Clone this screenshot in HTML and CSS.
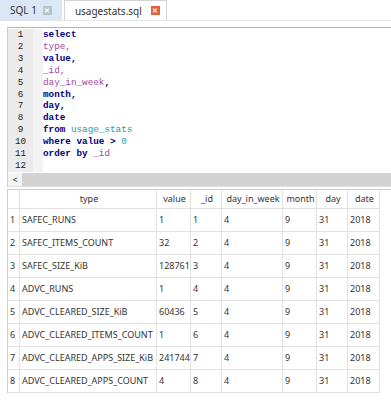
FILE: index.html
```
<!DOCTYPE html>
<html>
<head>
  <title>usagestats.sql</title>
  <link rel="stylesheet" href="styles.css">
</head>
<body>
  <div class="tabs">
    <div class="tab">SQL 1 <span class="close">&#x2715;</span></div>
    <div class="tab active">usagestats.sql <span class="close red">&#x2715;</span></div>
  </div>

  <div class="editor">
    <div class="code">
      <div class="gutter">
        <div>1</div><div>2</div><div>3</div><div>4</div><div>5</div><div>6</div>
        <div>7</div><div>8</div><div>9</div><div>10</div><div>11</div><div>12</div>
      </div>
      <div class="fold"></div>
      <div class="lines">
        <div><span class="kw">select</span></div>
        <div><span class="id">type,</span></div>
        <div><span class="kw">value,</span></div>
        <div><span class="id">_id,</span></div>
        <div><span class="id">day_in_week</span><span class="kw">,</span></div>
        <div><span class="kw">month,</span></div>
        <div><span class="kw">day,</span></div>
        <div><span class="kw">date</span></div>
        <div><span class="kw">from</span> <span class="tbl">usage_stats</span></div>
        <div><span class="kw">where value &gt;</span> <span class="tbl">0</span></div>
        <div><span class="kw">order by</span> <span class="id">_id</span></div>
        <div>&nbsp;</div>
      </div>
    </div>
    <div class="hscroll">
      <div class="arrow">&lt;</div>
      <div class="bar"></div>
    </div>
  </div>

  <div class="results">
    <table class="grid">
      <thead>
        <tr>
          <th class="num"></th>
          <th class="c-type">type</th>
          <th class="c-value">value</th>
          <th class="c-id">_id</th>
          <th class="c-diw">day_in_week</th>
          <th class="c-month">month</th>
          <th class="c-day">day</th>
          <th class="c-date">date</th>
        </tr>
      </thead>
      <tbody>
        <tr><td class="num">1</td><td>SAFEC_RUNS</td><td>1</td><td>1</td><td>4</td><td>9</td><td>31</td><td>2018</td></tr>
        <tr><td class="num">2</td><td>SAFEC_ITEMS_COUNT</td><td>32</td><td>2</td><td>4</td><td>9</td><td>31</td><td>2018</td></tr>
        <tr><td class="num">3</td><td>SAFEC_SIZE_KiB</td><td>128761</td><td>3</td><td>4</td><td>9</td><td>31</td><td>2018</td></tr>
        <tr><td class="num">4</td><td>ADVC_RUNS</td><td>1</td><td>4</td><td>4</td><td>9</td><td>31</td><td>2018</td></tr>
        <tr><td class="num">5</td><td>ADVC_CLEARED_SIZE_KiB</td><td>60436</td><td>5</td><td>4</td><td>9</td><td>31</td><td>2018</td></tr>
        <tr><td class="num">6</td><td>ADVC_CLEARED_ITEMS_COUNT</td><td>1</td><td>6</td><td>4</td><td>9</td><td>31</td><td>2018</td></tr>
        <tr><td class="num">7</td><td>ADVC_CLEARED_APPS_SIZE_KiB</td><td>241744</td><td>7</td><td>4</td><td>9</td><td>31</td><td>2018</td></tr>
        <tr><td class="num">8</td><td>ADVC_CLEARED_APPS_COUNT</td><td>4</td><td>8</td><td>4</td><td>9</td><td>31</td><td>2018</td></tr>
      </tbody>
    </table>
  </div>
</body>
</html>
```

FILE: styles.css
```
body {
  margin: 0;
  background-color: #fff;
  font-family: "Noto Sans", "Liberation Sans", sans-serif;
  font-size: 9px;
  color: #333;
  overflow: hidden;
}

.tabs {
  display: flex;
  height: 20px;
  border-bottom: 1px solid #e6e6e6;
}

.tab {
  display: flex;
  align-items: center;
  gap: 6px;
  padding: 0 10px;
  background-color: #dae7f5;
  font-size: 10px;
  color: #333;
}

.tab.active {
  background-color: #fff;
  border: 1px solid #d4d4d4;
  border-bottom: none;
  margin-left: 2px;
  padding: 0 6px 0 10px;
  gap: 9px;
}

.close {
  display: inline-flex;
  align-items: center;
  justify-content: center;
  width: 9px;
  height: 9px;
  background-color: #b9c3cc;
  color: #fff;
  font-size: 7px;
  font-weight: bold;
  line-height: 1;
}

.close.red {
  background-color: #e5603a;
}

.editor {
  margin: 6px 0 0 7px;
  border-top: 1px solid #b4b4b4;
  border-left: 1px solid #cfcfcf;
}

.code {
  display: flex;
  font-family: "Liberation Mono", monospace;
  font-size: 9.3px;
  line-height: 11.9px;
  padding-top: 1px;
}

.gutter {
  width: 25px;
  background-color: #ebebeb;
  text-align: center;
  color: #222;
}

.fold {
  width: 10px;
  background-color: #f3f3f3;
}

.lines {
  flex: 1;
}

.kw {
  color: #000080;
  font-weight: bold;
}

.id {
  color: #a347a3;
}

.tbl {
  color: #2a9c9c;
}

.hscroll {
  display: flex;
  height: 13px;
  margin-top: 1px;
  border-bottom: 1px solid #e0e0e0;
}

.arrow {
  width: 14px;
  font-size: 9px;
  line-height: 13px;
  text-align: center;
  color: #333;
  background-color: #f4f4f4;
}

.bar {
  flex: 1;
  background-color: #d3d3d3;
}

.results {
  margin: 2px 0 0 7px;
  border-top: 1px solid #cfcfcf;
  border-left: 1px solid #cfcfcf;
}

.grid {
  border-collapse: collapse;
  table-layout: fixed;
}

.grid th,
.grid td {
  border: 1px solid #e2e2e2;
  padding: 0 0 0 2px;
  white-space: nowrap;
  overflow: hidden;
  text-align: left;
}

.grid th {
  height: 18px;
  font-weight: normal;
  text-align: center;
  border-top: none;
}

.grid td {
  height: 22px;
}

.grid .num {
  width: 9px;
  padding: 0 0 0 2px;
  border-left: none;
}

.c-type { width: 134px; }
.c-value { width: 31px; }
.c-id { width: 28px; }
.c-diw { width: 58px; }
.c-month { width: 31px; }
.c-day { width: 28px; }
.c-date { width: 29px; }
```
